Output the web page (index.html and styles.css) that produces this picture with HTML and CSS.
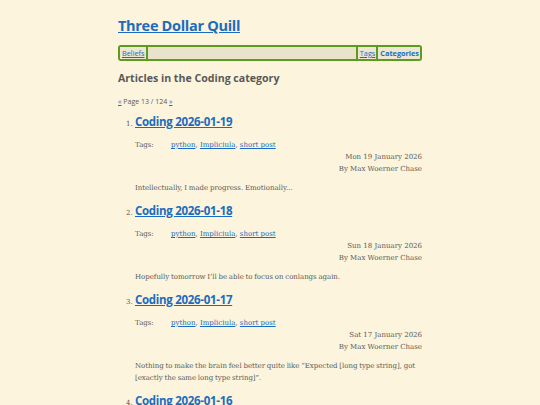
FILE: index.html
```html
<!DOCTYPE html>
<html lang="en">
<head>
<meta charset="utf-8">
<title>Three Dollar Quill - Coding</title>
<link rel="stylesheet" href="styles.css">
</head>
<body>
<div class="page">
  <header class="site-header">
    <h1 class="site-title"><a href="#">Three Dollar Quill</a></h1>
    <nav class="menu">
      <a class="menu-link" href="#">Beliefs</a>
      <span class="menu-spacer"></span>
      <a class="menu-link" href="#">Tags</a>
      <a class="menu-link current" href="#">Categories</a>
    </nav>
  </header>
  <main>
    <h2 class="page-heading">Articles in the Coding category</h2>
    <p class="pager"><a href="#">«</a> Page 13 / 124 <a href="#">»</a></p>
    <ol class="articles" start="1">
      <li class="article">
        <h3 class="article-title"><a href="#">Coding 2026-01-19</a></h3>
        <div class="tags"><span class="tags-label">Tags:</span><span class="tags-list"><a href="#">python</a>, <a href="#">Impliciula</a>, <a href="#">short post</a></span></div>
        <div class="meta"><div>Mon 19 January 2026</div><div>By Max Woerner Chase</div></div>
        <p class="summary">Intellectually, I made progress. Emotionally...</p>
      </li>
      <li class="article">
        <h3 class="article-title"><a href="#">Coding 2026-01-18</a></h3>
        <div class="tags"><span class="tags-label">Tags:</span><span class="tags-list"><a href="#">python</a>, <a href="#">Impliciula</a>, <a href="#">short post</a></span></div>
        <div class="meta"><div>Sun 18 January 2026</div><div>By Max Woerner Chase</div></div>
        <p class="summary">Hopefully tomorrow I’ll be able to focus on conlangs again.</p>
      </li>
      <li class="article">
        <h3 class="article-title"><a href="#">Coding 2026-01-17</a></h3>
        <div class="tags"><span class="tags-label">Tags:</span><span class="tags-list"><a href="#">python</a>, <a href="#">Impliciula</a>, <a href="#">short post</a></span></div>
        <div class="meta"><div>Sat 17 January 2026</div><div>By Max Woerner Chase</div></div>
        <p class="summary">Nothing to make the brain feel better quite like “Expected [long type string], got [exactly the same long type string]”.</p>
      </li>
      <li class="article">
        <h3 class="article-title"><a href="#">Coding 2026-01-16</a></h3>
        <div class="tags"><span class="tags-label">Tags:</span><span class="tags-list"><a href="#">python</a>, <a href="#">Impliciula</a>, <a href="#">short post</a></span></div>
        <div class="meta"><div>Fri 16 January 2026</div><div>By Max Woerner Chase</div></div>
        <p class="summary">More progress.</p>
      </li>
    </ol>
  </main>
</div>
</body>
</html>
```

FILE: styles.css
```css
html, body {
  margin: 0;
  padding: 0;
  background: #fcf4dc;
}
body {
  font-family: "DejaVu Serif", serif;
  color: #5a5a5a;
  font-size: 7px;
}
a { color: #1b6cbf; }
.page {
  width: 304px;
  margin: 0 auto;
  padding-top: 14px;
}
.site-title {
  margin: 0;
  font-family: "Open Sans", sans-serif;
  font-size: 14.5px;
  letter-spacing: -0.3px;
  font-weight: 700;
  line-height: 24px;
}
.site-title a { color: #1b6cbf; }
.menu {
  margin-top: 7px;
  display: flex;
  align-items: stretch;
  border: 2px solid #5c9a20;
  border-radius: 3px;
  background: #e9e3cc;
  height: 12px;
  font-family: "Open Sans", sans-serif;
  font-size: 7.3px;
  line-height: 12px;
}
.menu-link {
  padding: 0 1px 0 2px;
  background: #ece6d2;
  border-right: 2px solid #5c9a20;
}
.menu-link:last-child { border-right: 0; }
.menu-spacer {
  flex: 1;
  border-right: 2px solid #5c9a20;
}
.menu-link.current { font-weight: 700; text-decoration: none; }
.page-heading {
  margin: 8px 0 0;
  font-family: "Open Sans", sans-serif;
  font-size: 10.6px;
  line-height: 18px;
  color: #595959;
}
.pager {
  margin: 9px 0 0;
  font-family: "Open Sans", sans-serif;
  font-size: 7px;
  line-height: 12px;
}
.articles {
  margin: 4px 0 0;
  padding-left: 17px;
}
.article-title {
  margin: 0;
  font-family: "Open Sans", sans-serif;
  font-size: 11.5px;
  letter-spacing: -0.3px;
  line-height: 20px;
}
.tags {
  margin-top: 7px;
  display: flex;
  line-height: 12px;
}
.tags-label { width: 36px; }
.meta {
  text-align: right;
  line-height: 12px;
}
.summary {
  margin: 7px 0 7px;
  line-height: 12px;
  word-spacing: -0.4px;
  letter-spacing: -0.03px;
}
```
